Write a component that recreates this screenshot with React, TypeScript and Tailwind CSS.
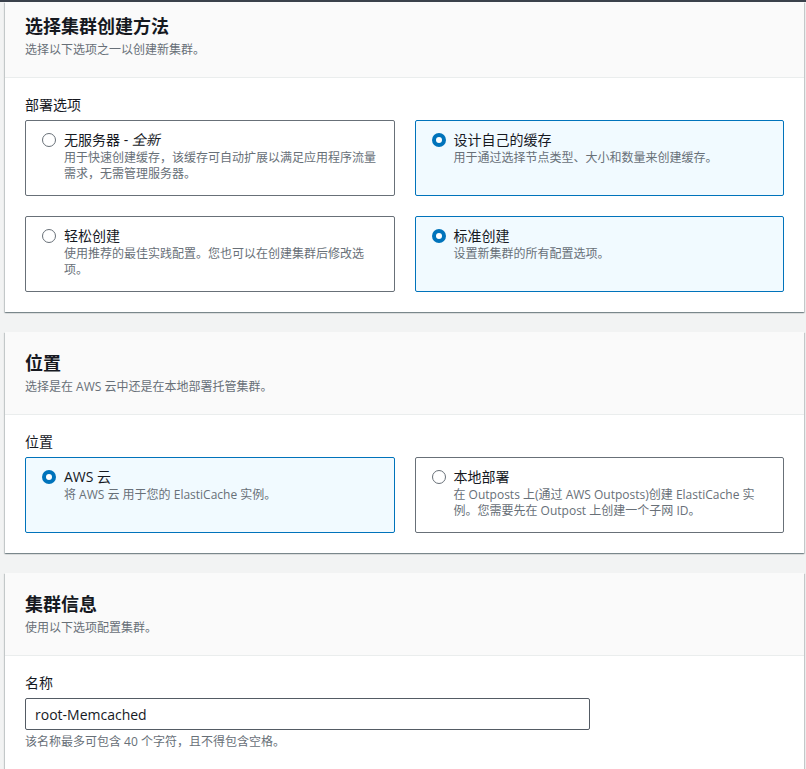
import React from 'react'

const FONT = { fontFamily: '"Open Sans", "Noto Sans CJK SC", sans-serif' }

type Opt = { title: React.ReactNode; desc: string; selected?: boolean }

const DEPLOY: Opt[] = [
  { title: <>无服务器 - <i>全新</i></>, desc: '用于快速创建缓存，该缓存可自动扩展以满足应用程序流量需求，无需管理服务器。' },
  { title: '设计自己的缓存', desc: '用于通过选择节点类型、大小和数量来创建缓存。', selected: true },
  { title: '轻松创建', desc: '使用推荐的最佳实践配置。您也可以在创建集群后修改选项。' },
  { title: '标准创建', desc: '设置新集群的所有配置选项。', selected: true },
]

const LOCATION: Opt[] = [
  { title: 'AWS 云', desc: '将 AWS 云 用于您的 ElastiCache 实例。', selected: true },
  { title: '本地部署', desc: '在 Outposts 上(通过 AWS Outposts)创建 ElastiCache 实例。您需要先在 Outpost 上创建一个子网 ID。' },
]

function Radio({ on }: { on?: boolean }) {
  if (on) {
    return (
      <span className="mt-[3px] flex h-[14px] w-[14px] shrink-0 items-center justify-center rounded-full bg-[#0073bb]">
        <span className="h-[6px] w-[6px] rounded-full bg-white" />
      </span>
    )
  }
  return <span className="mt-[3px] h-[14px] w-[14px] shrink-0 rounded-full border-[1.5px] border-[#687078] bg-white" />
}

function Card({ opt }: { opt: Opt }) {
  return (
    <div
      className={`flex min-h-[76px] gap-2 rounded-[2px] border pl-4 pr-3 pt-[9px] pb-2 ${
        opt.selected ? 'border-[#0073bb] bg-[#f1faff]' : 'border-[#687078] bg-white'
      }`}
    >
      <Radio on={opt.selected} />
      <div className="flex flex-col">
        <span className="text-sm leading-5 text-[#16191f]">{opt.title}</span>
        <span className="text-xs leading-4 text-[#687078]">{opt.desc}</span>
      </div>
    </div>
  )
}

function Panel({ title, sub, first, children }: { title: string; sub: string; first?: boolean; children: React.ReactNode }) {
  return (
    <section className="ml-[5px] mr-[2px] bg-white shadow-[0_1px_1px_0_rgba(0,28,36,0.3),1px_1px_1px_0_rgba(0,28,36,0.15),-1px_1px_1px_0_rgba(0,28,36,0.15)]">
      <div className={`border-b border-[#eaeded] bg-[#fafafa] px-5 pb-[17px] ${first ? 'pt-[10px]' : 'pt-[17px]'}`}>
        <h2 className="text-[18px] font-bold leading-7 text-[#16191f]">{title}</h2>
        <p className="text-xs leading-5 text-[#687078]">{sub}</p>
      </div>
      <div className="px-5 pb-5 pt-[17px]">{children}</div>
    </section>
  )
}

export default function App() {
  return (
    <div className="min-h-[769px] w-[806px] bg-[#f2f3f3]" style={FONT}>
      <div className="h-[2px] bg-[#3a414b]" />

      <div className="flex flex-col gap-5">
        <Panel first title="选择集群创建方法" sub="选择以下选项之一以创建新集群。">
          <div className="mb-[5px] text-sm leading-5 text-[#16191f]">部署选项</div>
          <div className="grid grid-cols-2 gap-5">
            {DEPLOY.map((o, i) => (
              <Card key={i} opt={o} />
            ))}
          </div>
        </Panel>

        <Panel title="位置" sub="选择是在 AWS 云中还是在本地部署托管集群。">
          <div className="mb-[5px] text-sm leading-5 text-[#16191f]">位置</div>
          <div className="grid grid-cols-2 gap-5">
            {LOCATION.map((o, i) => (
              <Card key={i} opt={o} />
            ))}
          </div>
        </Panel>

        <Panel title="集群信息" sub="使用以下选项配置集群。">
          <div className="mb-[5px] text-sm leading-5 text-[#16191f]">名称</div>
          <input
            readOnly
            value="root-Memcached"
            className="h-8 w-[565px] rounded-[2px] border border-[#545b64] bg-white px-[9px] text-sm text-[#16191f] outline-none"
            style={FONT}
          />
          <p className="mt-1 text-xs leading-4 text-[#687078]">该名称最多可包含 40 个字符，且不得包含空格。</p>
        </Panel>
      </div>
    </div>
  )
}
